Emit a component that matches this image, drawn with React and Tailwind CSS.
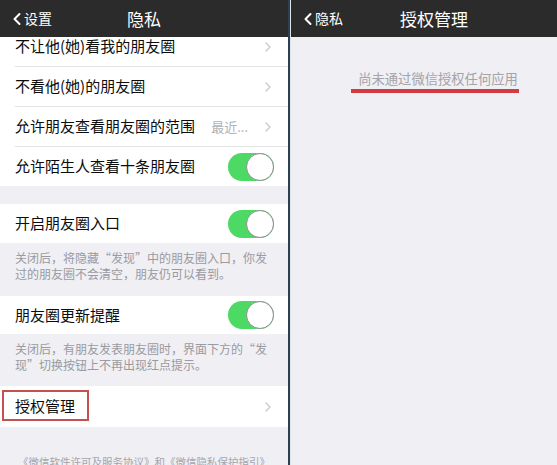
import React from 'react';
import { ChevronLeft, ChevronRight } from 'lucide-react';

const font = { fontFamily: '"Noto Sans CJK SC", "Noto Sans", sans-serif' };

const Toggle = () => (
  <div className="w-[46px] h-[28px] rounded-full bg-[#4cd964] relative flex-shrink-0">
    <div className="absolute right-0 top-0 w-[28px] h-[28px] rounded-full bg-white border border-[#8f8f8f]" />
  </div>
);

const Arrow = () => <ChevronRight className="w-[16px] h-[16px] text-[#c7c7cc] flex-shrink-0 -mr-[2px]" strokeWidth={1.8} />;

const Row = ({ label, right, last, h = 'h-[40px]', boxed }) => (
  <div className={`${h} bg-white flex items-center pl-[15px] relative`}>
    <div className={`flex-1 h-full flex items-center pr-[14px] ${last ? '' : 'border-b border-[#e3e3e6]'}`}>
      <span className="flex-1 text-[15px] text-[#0c0c0c]">{label}</span>
      {right}
    </div>
    {boxed && (
      <div className="absolute left-[2px] top-[4px] w-[87px] h-[31px] border-2 border-[#c4504f]" />
    )}
  </div>
);

const Note = ({ children, pt = 'pt-[7px]', pb = 'pb-[14px]' }) => (
  <div className={`px-[15px] ${pt} ${pb} text-[12px] leading-[16px] text-[#9a9aa0]`}>{children}</div>
);

const NavBar = ({ back, title, titleShift = '' }) => (
  <div className="h-[37px] bg-[#2b2b2b] relative flex items-center justify-center text-white flex-shrink-0">
    <div className="absolute left-[7px] top-0 h-full flex items-center">
      <ChevronLeft className="w-[20px] h-[20px]" strokeWidth={2.4} />
      <span className="text-[14px] -ml-[3px]">{back}</span>
    </div>
    <span className={`text-[17px] ${titleShift}`}>{title}</span>
  </div>
);

export default function App() {
  return (
    <div lang="zh-CN" className="w-[557px] h-[465px] flex overflow-hidden bg-[#efeff4]" style={font}>
      {/* 隐私 */}
      <div className="w-[288px] h-full flex flex-col">
        <NavBar back="设置" title="隐私" />
        <div className="flex-1 overflow-hidden">
          <div className="-mt-[10px]">
            <Row label="不让他(她)看我的朋友圈" right={<Arrow />} />
            <Row label="不看他(她)的朋友圈" right={<Arrow />} />
            <Row
              label="允许朋友查看朋友圈的范围"
              right={
                <>
                  <span className="text-[13px] text-[#b0b0b5] mr-[12px]">最近...</span>
                  <Arrow />
                </>
              }
            />
            <Row label="允许陌生人查看十条朋友圈" right={<Toggle />} last h="h-[39px]" />

            <div className="h-[18px]" />
            <Row label="开启朋友圈入口" right={<Toggle />} last h="h-[39px]" />
            <Note>
              关闭后，将隐藏“发现”中的朋友圈入口，你发过的朋友圈不会清空，朋友仍可以看到。
            </Note>

            <Row label="朋友圈更新提醒" right={<Toggle />} last h="h-[38px]" />
            <Note pb="pb-[13px]">
              关闭后，有朋友发表朋友圈时，界面下方的“发现”切换按钮上不再出现红点提示。
            </Note>

            <Row label="授权管理" right={<Arrow />} last h="h-[41px]" boxed />

            <div className="pt-[27px] text-center text-[10.5px] text-[#a5a5ab] whitespace-nowrap">
              《微信软件许可及服务协议》和《微信隐私保护指引》
            </div>
          </div>
        </div>
      </div>

      <div className="w-[2px] h-full bg-[#2f3f52] flex-shrink-0" />

      {/* 授权管理 */}
      <div className="flex-1 h-full flex flex-col bg-[#efeff4] border-l border-[#dfe3ea]">
        <NavBar back="隐私" title="授权管理" titleShift="ml-[20px]" />
        <div className="flex flex-col items-center pt-[33px] pl-[28px]">
          <span className="text-[13.3px] text-[#a3a3a8] leading-[18px]">尚未通过微信授权任何应用</span>
          <div className="w-[168px] h-[4px] bg-[#d43a42] mt-[1px] -ml-[6px]" />
        </div>
      </div>
    </div>
  );
}
